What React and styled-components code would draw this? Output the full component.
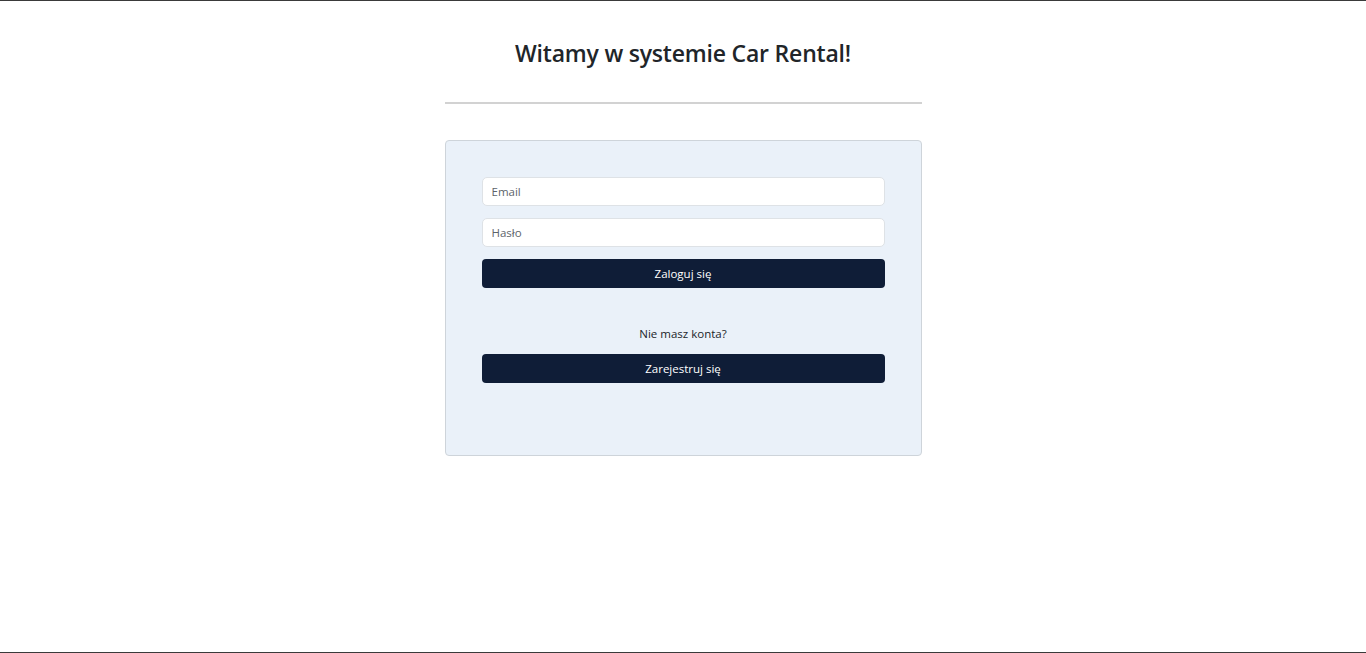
import styled, { createGlobalStyle } from "styled-components";

const Global = createGlobalStyle`
  html, body {
    margin: 0;
    padding: 0;
    background: #ffffff;
  }
  body {
    font-family: "Open Sans", "Noto Sans", sans-serif;
    color: #212529;
  }
  * {
    box-sizing: border-box;
  }
`;

export default function App() {
  return (
    <>
      <Global />
      <Ramka>
        <Kolumna>
          <Tytul>Witamy w systemie Car Rental!</Tytul>
          <Linia />
          <Karta>
            <Formularz onSubmit={(e) => e.preventDefault()}>
              <Pole type="email" placeholder="Email" />
              <Pole type="password" placeholder="Hasło" />
              <Przycisk type="submit">Zaloguj się</Przycisk>
            </Formularz>
            <Rejestracja>
              <p>Nie masz konta?</p>
              <Przycisk type="button">Zarejestruj się</Przycisk>
            </Rejestracja>
          </Karta>
        </Kolumna>
      </Ramka>
    </>
  );
}

const Ramka = styled.div`
  width: 100vw;
  height: 653px;
  border-top: 1px solid #3a3a3a;
  border-bottom: 1px solid #3a3a3a;
  display: flex;
  justify-content: center;
`;

const Kolumna = styled.div`
  width: 477px;
  display: flex;
  flex-direction: column;
  align-items: stretch;
`;

const Tytul = styled.h1`
  margin: 36px 0 0 0;
  text-align: center;
  font-size: 23px;
  font-weight: 600;
  line-height: 32px;
  color: #212529;
  letter-spacing: -0.2px;
`;

const Linia = styled.div`
  height: 2px;
  background: #d2d2d2;
  margin-top: 33px;
`;

const Karta = styled.div`
  margin-top: 36px;
  height: 316px;
  background: #eaf1f9;
  border: 1px solid #ced4da;
  border-radius: 4px;
  padding: 36px 36px;
  display: flex;
  flex-direction: column;
`;

const Formularz = styled.form`
  display: flex;
  flex-direction: column;
  gap: 12px;
`;

const Pole = styled.input`
  height: 29px;
  width: 100%;
  border: 1px solid #dee2e6;
  border-radius: 5px;
  background: #ffffff;
  padding: 0 9px;
  font-family: "Open Sans", "Noto Sans", sans-serif;
  font-size: 11.5px;
  color: #212529;
  outline: none;
  &::placeholder {
    color: #5c636a;
  }
`;

const Przycisk = styled.button`
  height: 29px;
  width: 100%;
  border: 0;
  border-radius: 4px;
  background: #0f1d37;
  color: #ffffff;
  font-family: "Open Sans", "Noto Sans", sans-serif;
  font-size: 11.5px;
  cursor: pointer;
`;

const Rejestracja = styled.div`
  margin-top: 37px;
  display: flex;
  flex-direction: column;
  align-items: center;
  p {
    margin: 0 0 12px 0;
    font-size: 11.5px;
    line-height: 17px;
    color: #212529;
  }
`;
